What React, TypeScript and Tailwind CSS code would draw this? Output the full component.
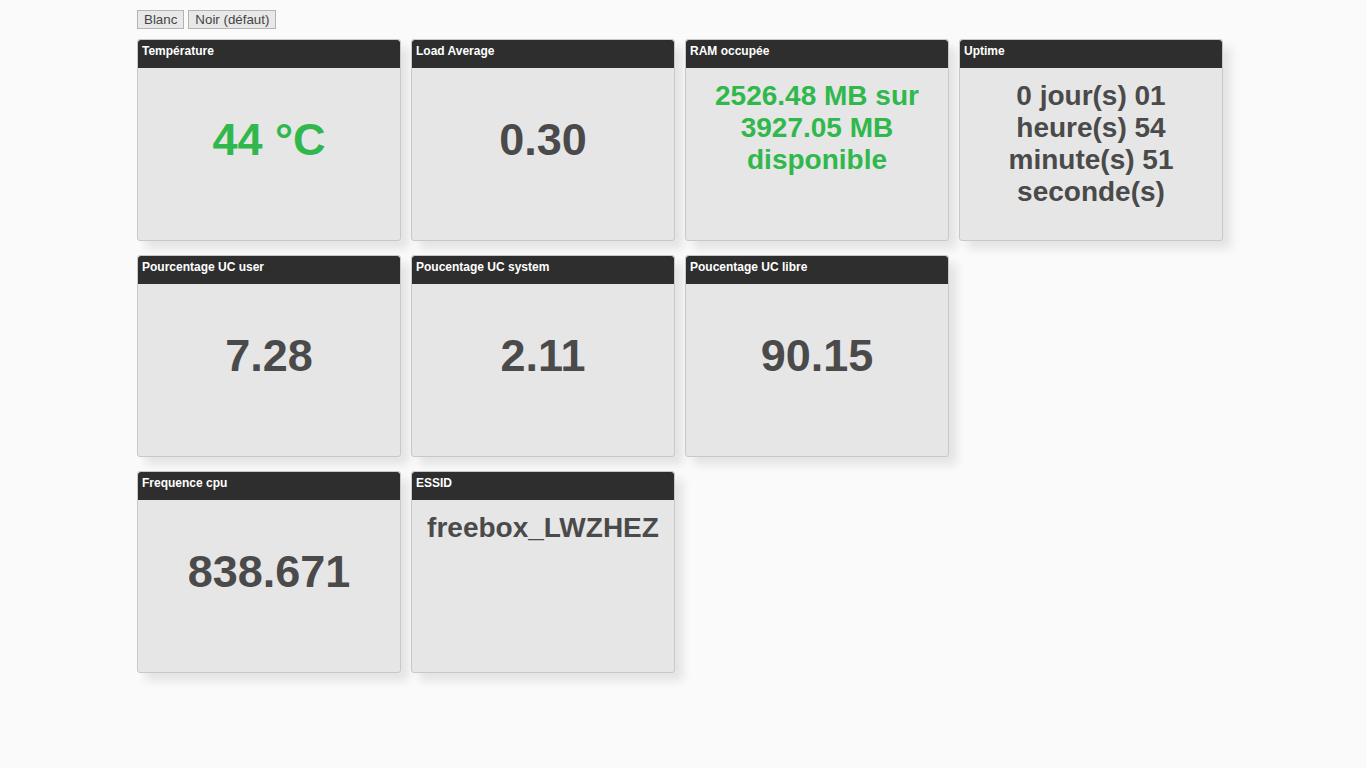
import React from "react";

type Card = { title: string; value: string; big?: boolean; green?: boolean };

// rows as laid out on the page (floats wrap like this in the original)
const rows: Card[][] = [
  [
    { title: "Température", value: "44 °C", big: true, green: true },
    { title: "Load Average", value: "0.30", big: true },
    { title: "RAM occupée", value: "2526.48 MB sur 3927.05 MB disponible", green: true },
    { title: "Uptime", value: "0 jour(s) 01 heure(s) 54 minute(s) 51 seconde(s)" },
  ],
  [
    { title: "Pourcentage UC user", value: "7.28", big: true },
    { title: "Poucentage UC system", value: "2.11", big: true },
    { title: "Poucentage UC libre", value: "90.15", big: true },
  ],
  [
    { title: "Frequence cpu", value: "838.671", big: true },
    { title: "ESSID", value: "freebox_LWZHEZ" },
  ],
];

const Widget = ({ card }: { card: Card }) => {
  return (
    <div className="h-[202px] w-[264px] overflow-hidden rounded-[3px] border border-[#c8c8c8] bg-[#e6e6e6] shadow-[8px_8px_10px_rgba(0,0,0,0.09)]">
      <div className="h-[28px] rounded-t-[3px] bg-[#2e2e2e] pl-[4px] pt-[3px] text-[12px] font-bold leading-[16px] text-white">
        {card.title}
      </div>
      <div
        className={
          card.big
            ? "px-2 pt-3 text-center text-[45px] font-bold leading-[120px]"
            : "px-2 pt-3 text-center text-[28px] font-bold leading-[32px]"
        }
      >
        <span className={card.green ? "text-[#30b84c]" : "text-[#4a4a4a]"}>{card.value}</span>
      </div>
    </div>
  );
};

export default function App() {
  return (
    <div className="min-h-[768px] bg-[#fafafa] pl-[137px] pt-[10px] font-['Liberation_Sans',Arial,sans-serif]">
      <div className="flex gap-[4px]">
        <button className="h-[19px] border border-[#b4b4b4] bg-[#e8e8e8] px-[6px] text-[13.33px] leading-[16px] text-[#444]">
          Blanc
        </button>
        <button className="h-[19px] border border-[#b4b4b4] bg-[#e8e8e8] px-[6px] text-[13.33px] leading-[16px] text-[#444]">
          Noir (défaut)
        </button>
      </div>
      <div className="mt-[10px] flex flex-col gap-[14px]">
        {rows.map((row, i) => (
          <div key={i} className="flex gap-[10px]">
            {row.map((card) => (
              <Widget key={card.title} card={card} />
            ))}
          </div>
        ))}
      </div>
    </div>
  );
}
